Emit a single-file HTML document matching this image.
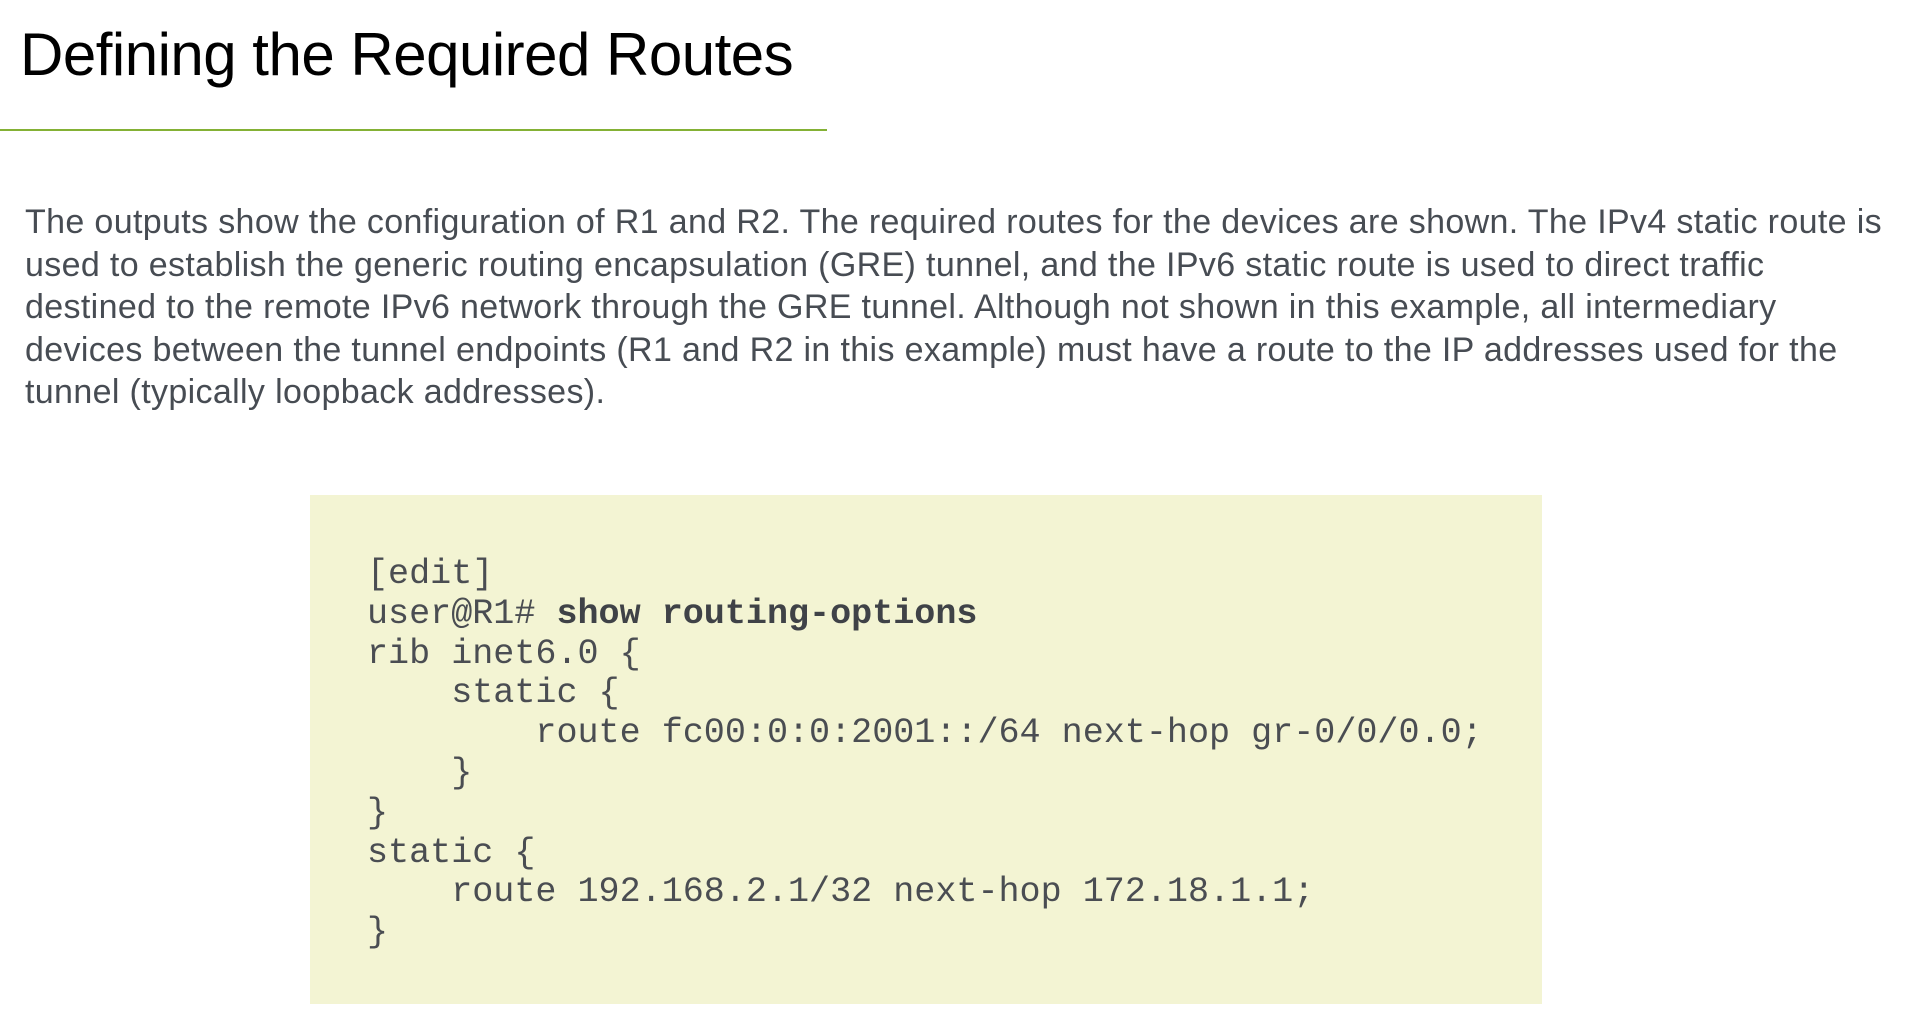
<!DOCTYPE html>
<html><head><meta charset="utf-8"><style>
html,body{margin:0;padding:0;background:#fff;width:1930px;height:1034px;overflow:hidden}
h1{position:absolute;left:20px;top:15px;margin:0;font:400 60px/80px "Liberation Sans",sans-serif;color:#000;letter-spacing:-0.5px;white-space:nowrap}
.rule{position:absolute;left:0;top:129px;width:827px;height:2px;background:#84b135}
.p{position:absolute;left:25px;top:201px;font:400 34px/42.6px "Liberation Sans",sans-serif;color:#474c53;white-space:nowrap;letter-spacing:0.35px}
.code{position:absolute;left:310px;top:495px;width:1232px;height:509px;background:#f3f4d3}
pre{position:absolute;left:367px;top:555px;margin:0;font:400 35.1px/39.8px "Liberation Mono",monospace;color:#4a4d52}
b{font-weight:700;color:#3f4247}
</style></head><body>
<h1>Defining the Required Routes</h1>
<div class="rule"></div>
<div class="p">The outputs show the configuration of R1 and R2. The required routes for the devices are shown. The IPv4 static route is<br>used to establish the generic routing encapsulation (GRE) tunnel, and the IPv6 static route is used to direct traffic<br>destined to the remote IPv6 network through the GRE tunnel. Although not shown in this example, all intermediary<br>devices between the tunnel endpoints (R1 and R2 in this example) must have a route to the IP addresses used for the<br>tunnel (typically loopback addresses).</div>
<div class="code"></div>
<pre>[edit]
user@R1# <b>show routing-options</b>
rib inet6.0 {
    static {
        route fc00:0:0:2001::/64 next-hop gr-0/0/0.0;
    }
}
static {
    route 192.168.2.1/32 next-hop 172.18.1.1;
}</pre>
</body></html>
